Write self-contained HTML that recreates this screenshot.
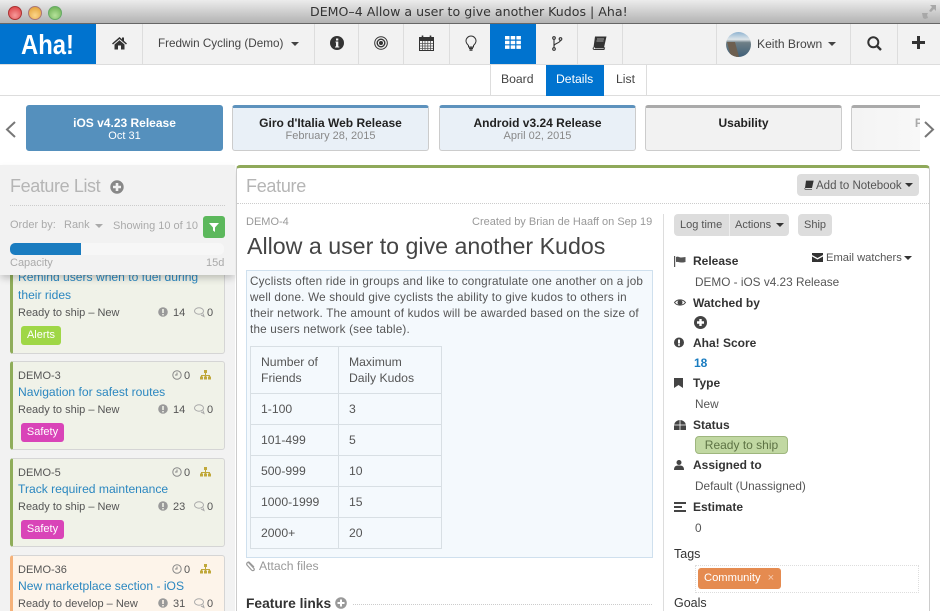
<!DOCTYPE html>
<html><head><meta charset="utf-8"><style>
html,body{margin:0;padding:0;overflow:hidden;width:940px;height:611px}
#w{position:relative;width:940px;height:611px;overflow:hidden;background:#fff;font-family:"Liberation Sans",sans-serif;font-size:12px;color:#555;filter:blur(.3px)}
.a{position:absolute}
.t{position:absolute;white-space:nowrap;line-height:20px}
.s{font-size:11px}
.v{position:absolute;width:1px;top:24px;height:40px;background:#ddd}
svg{position:absolute;overflow:visible}
.rc{position:absolute;top:105px;height:42px;border:1px solid #ccc;border-top:3px solid #5d92bd;border-radius:3px;background:#e9f0f7;text-align:center;box-sizing:content-box;line-height:12px;font-size:11px;color:#888;width:195px}
.rc b{display:block;color:#222;padding-top:9px;margin-bottom:1px;font-size:12px;line-height:12px}
.card{position:absolute;left:10px;width:211px;border:1px solid #d5d5d5;border-left:3px solid #8fad5a;border-radius:3px;background:#f0f2e8;box-sizing:content-box}
.tag{position:absolute;color:#fff;border-radius:3px;text-align:center;font-size:11px;line-height:19px;height:19px}
.blue{color:#2b87c0;font-size:12.1px}
.lb{font-weight:bold;color:#333;font-size:12px}
.btn{position:absolute;background:#ddd;border-radius:4px;height:22px;line-height:23px;color:#555;font-size:11px;text-align:center}
td{border:1px solid #d8dfe4;padding:0 0 0 10px;font-size:12.2px;color:#555;line-height:16px}
</style></head><body><div id="w">

<!-- title bar -->
<div class="a" style="left:0;top:0;width:940px;height:23px;background:linear-gradient(#ececec,#b3b3b3);border-bottom:1px solid #666"></div>
<div class="a" style="left:8px;top:6px;width:12px;height:12px;border-radius:50%;background:radial-gradient(circle at 50% 70%,#f79a9a,#d9363a);border:.5px solid #a33"></div>
<div class="a" style="left:28px;top:6px;width:12px;height:12px;border-radius:50%;background:radial-gradient(circle at 50% 70%,#fbd58a,#e09b2c);border:.5px solid #a77"></div>
<div class="a" style="left:48px;top:6px;width:12px;height:12px;border-radius:50%;background:radial-gradient(circle at 50% 70%,#b5e29a,#62a94a);border:.5px solid #6a6"></div>
<div class="t" style="left:310px;top:2px;font-family:'DejaVu Sans',sans-serif;font-size:12.6px;color:#333">DEMO–4 Allow a user to give another Kudos | Aha!</div>
<svg style="left:921px;top:4px" width="16" height="16" viewBox="0 0 16 16" fill="#a8a8a8"><path d="M9 1h6v6l-2-2-3 3-2-1 3-4zM1 9l6 0-1 2 1 3-3 1-2-1z"/></svg>

<!-- nav -->
<div class="a" style="left:0;top:24px;width:940px;height:40px;background:#f2f2f2;border-bottom:1px solid #ddd"></div>
<div class="a" style="left:0;top:24px;width:96px;height:40px;background:#0073cf"></div>
<div class="t" style="left:21px;top:31px;font-size:28px;font-weight:bold;color:#fff;line-height:28px;transform:scaleX(.85);transform-origin:left">Aha!</div>
<div class="v" style="left:142px"></div><div class="v" style="left:314px"></div><div class="v" style="left:358px"></div><div class="v" style="left:403px"></div><div class="v" style="left:449px"></div><div class="v" style="left:577px"></div><div class="v" style="left:622px"></div><div class="v" style="left:716px"></div><div class="v" style="left:850px"></div><div class="v" style="left:897px"></div>
<div class="a" style="left:490px;top:24px;width:46px;height:40px;background:#0073cf"></div>

<svg style="left:112px;top:36px" width="15" height="14" viewBox="0 0 15 14" fill="#333"><path d="M7.5 1L0 7.5l1 1 6.5-5.5 6.5 5.5 1-1-3-2.6V1.5h-2v1.7zM2.5 8.5V13.5H6V9.5h3v4h3.5V8.5l-5-4.2z"/></svg>
<div class="t" style="left:158px;top:34px;font-size:11.7px;color:#444">Fredwin Cycling (Demo)</div>
<svg style="left:291px;top:42px" width="8" height="4" fill="#444"><path d="M0 0h8L4 4z"/></svg>
<svg style="left:330px;top:36px" width="14" height="14" viewBox="0 0 14 14"><circle cx="7" cy="7" r="7" fill="#333"/><path d="M5.5 5.5H8.3V10.500H9.3V11.500H5V10.500H6V6.500H5.500zM6 2.500H8.300V4.500H6z" fill="#f2f2f2"/></svg>
<svg style="left:374px;top:36px" width="14" height="14" viewBox="0 0 14 14" fill="none" stroke="#333"><circle cx="7" cy="7" r="6.3"/><circle cx="7" cy="7" r="3.8" stroke-width="1.4"/><circle cx="7" cy="7" r="1.5" fill="#333"/></svg>
<svg style="left:419px;top:35px" width="15" height="16" viewBox="0 0 15 16"><rect x=".5" y="2.5" width="14" height="13" fill="#f2f2f2" stroke="#333"/><rect x=".5" y="2.5" width="14" height="3.5" fill="#333"/><path d="M3.5 0.5v3M11.5 0.5v3" stroke="#333" stroke-width="1.6"/><path d="M1 8.5h13M1 11h13M1 13.5h13M3.5 6v9M6 6v9M8.8 6v9M11.5 6v9" stroke="#555" stroke-width=".8"/></svg>
<svg style="left:465px;top:36px" width="12" height="15" viewBox="0 0 12 15" fill="none" stroke="#333"><path d="M3.5 9.5C2 8 1 6.8 1 5a5 5 0 0 1 10 0c0 1.8-1 3-2.5 4.5V11h-5z"/><path d="M4 12.3h4M4.5 14h3" stroke-width="1.4"/></svg>
<svg style="left:505px;top:36px" width="16" height="13" fill="#fff"><path d="M0 0h4.5v3.5H0zM5.7 0h4.5v3.5H5.700zM11.4 0h4.5v3.5h-4.5zM0 4.700h4.500v3.500H0zM5.700 4.700h4.500v3.500H5.700zM11.400 4.700h4.500v3.500h-4.500zM0 9.400h4.500v3.500H0zM5.700 9.400h4.500v3.500H5.700zM11.400 9.400h4.500v3.500h-4.500z"/></svg>
<svg style="left:551px;top:36px" width="12" height="15" viewBox="0 0 12 15" fill="none" stroke="#333" stroke-width="1.1"><circle cx="3" cy="2" r="1.3"/><circle cx="3" cy="13" r="1.3"/><circle cx="9.5" cy="3" r="1.3"/><path d="M3 3.300v8.400M3 10c0-3 6-2.500 6.500-5.800"/></svg>
<svg style="left:592px;top:36px" width="15" height="14" viewBox="0 0 15 14"><path d="M3 0.500H14.500L12 11.500H1.500z" fill="#333"/><path d="M1.500 11.500C.5 13.500 2 13.500 3 13.500H12l.5-1.600H3" fill="#f2f2f2" stroke="#333"/><path d="M5 3h7M4.500 5h7" stroke="#ccc" stroke-width=".8"/></svg>

<div class="a" style="left:726px;top:32px;width:25px;height:25px;border-radius:50%;background:linear-gradient(#8fb3d0 0,#dfe6ea 30%,#6e7f86 42%,#3f5f78 100%);overflow:hidden"><div class="a" style="left:3px;top:10px;width:8px;height:15px;background:#6d5f50;transform:skewX(15deg)"></div></div>
<div class="t" style="left:757px;top:34px;font-size:12.1px;color:#444">Keith Brown</div>
<svg style="left:828px;top:42px" width="8" height="4" fill="#444"><path d="M0 0h8L4 4z"/></svg>
<svg style="left:867px;top:36px" width="15" height="15" viewBox="0 0 15 15" fill="none" stroke="#333" stroke-width="2"><circle cx="6.3" cy="6.3" r="5"/><path d="M10 10l4 4" stroke-width="2.4"/></svg>
<svg style="left:912px;top:36px" width="13" height="13" fill="#333"><path d="M5 0h3v5h5v3H8v5H5V8H0V5h5z"/></svg>

<!-- sub tabs -->
<div class="a" style="left:0;top:95px;width:940px;height:1px;background:#ddd"></div>
<div class="a" style="left:490px;top:65px;width:157px;height:30px;border-left:1px solid #ddd;border-right:1px solid #ddd;box-sizing:border-box"></div>
<div class="a" style="left:546px;top:65px;width:58px;height:31px;background:#0073cf"></div>
<div class="t" style="left:501px;top:69px;color:#444;font-size:12.2px">Board</div>
<div class="t" style="left:556px;top:69px;color:#fff;font-size:12.2px">Details</div>
<div class="t" style="left:616px;top:69px;color:#444;font-size:12.2px">List</div>

<!-- releases -->
<svg style="left:5px;top:121px" width="11" height="17" fill="none" stroke="#777" stroke-width="2"><path d="M10 1L2 8.5l8 7.5"/></svg>
<svg style="left:924px;top:121px" width="11" height="17" fill="none" stroke="#777" stroke-width="2"><path d="M1 1l8 7.5L1 16"/></svg>
<div class="rc" style="left:26px;background:#5590bd;border-color:#5590bd;color:#fff"><b style="color:#fff">iOS v4.23 Release</b>Oct 31</div>
<div class="rc" style="left:232px"><b>Giro d'Italia Web Release</b>February 28, 2015</div>
<div class="rc" style="left:439px"><b>Android v3.24 Release</b>April 02, 2015</div>
<div class="rc" style="left:645px;border-top-color:#aaa;background:#f2f2f2"><b>Usability</b></div>
<div class="a" style="left:851px;top:105px;width:69px;height:46px;overflow:hidden"><div class="rc" style="left:0;top:0;border-top-color:#aaa;background:linear-gradient(90deg,#f4f4f4,#fff)"><b style="color:#aaa;padding-left:4px">Performance</b></div></div>

<!-- left column -->
<div class="a" style="left:0;top:165px;width:235px;height:446px;background:#f2f2f2"></div>
<div class="card" style="top:250px;height:102px"></div>
<div class="t blue" style="left:18px;top:267px">Remind users when to fuel during</div>
<div class="t blue" style="left:18px;top:285px">their rides</div>
<div class="t s" style="left:18px;top:303px">Ready to ship – New</div>
<svg style="left:158px;top:307px" width="10" height="10"><circle cx="5" cy="5" r="4.8" fill="#999"/><path d="M4.2 2h1.6v4H4.2zM4.2 7h1.6v1.4H4.2z" fill="#f0f2e8"/></svg>
<div class="t s" style="left:173px;top:303px">14</div>
<svg style="left:194px;top:307px" width="11" height="10" fill="none" stroke="#aaa"><ellipse cx="5" cy="4" rx="4.5" ry="3.2"/><path d="M7 8l3 1.5-1-3"/></svg>
<div class="t s" style="left:207px;top:303px">0</div>
<div class="tag" style="left:21px;top:326px;width:40px;background:#9fd746">Alerts</div>

<div class="card" style="top:361px;height:87px"></div>
<div class="t s" style="left:18px;top:366px">DEMO-3</div>
<svg style="left:172px;top:370px" width="10" height="10" fill="none" stroke="#888"><circle cx="5" cy="5" r="4.2"/><path d="M5 2.5V5H3"/></svg>
<div class="t s" style="left:184px;top:366px">0</div>
<svg style="left:200px;top:370px" width="11" height="10" fill="#c0a83a"><path d="M4 0h3v3H4zM0 6.5h3v3H0zM4 6.5h3v3H4zM8 6.5h3v3H8zM5 3h1v2h4v2H9V6H6v1H5V6H2v1H1V5h4z"/></svg>
<div class="t blue" style="left:18px;top:382px">Navigation for safest routes</div>
<div class="t s" style="left:18px;top:400px">Ready to ship – New</div>
<svg style="left:158px;top:404px" width="10" height="10"><circle cx="5" cy="5" r="4.8" fill="#999"/><path d="M4.2 2h1.6v4H4.2zM4.2 7h1.6v1.4H4.2z" fill="#f0f2e8"/></svg>
<div class="t s" style="left:173px;top:400px">14</div>
<svg style="left:194px;top:404px" width="11" height="10" fill="none" stroke="#aaa"><ellipse cx="5" cy="4" rx="4.5" ry="3.2"/><path d="M7 8l3 1.5-1-3"/></svg>
<div class="t s" style="left:207px;top:400px">0</div>
<div class="tag" style="left:21px;top:423px;width:43px;background:#d944b8">Safety</div>

<div class="card" style="top:458px;height:87px"></div>
<div class="t s" style="left:18px;top:463px">DEMO-5</div>
<svg style="left:172px;top:467px" width="10" height="10" fill="none" stroke="#888"><circle cx="5" cy="5" r="4.2"/><path d="M5 2.5V5H3"/></svg>
<div class="t s" style="left:184px;top:463px">0</div>
<svg style="left:200px;top:467px" width="11" height="10" fill="#c0a83a"><path d="M4 0h3v3H4zM0 6.5h3v3H0zM4 6.5h3v3H4zM8 6.5h3v3H8zM5 3h1v2h4v2H9V6H6v1H5V6H2v1H1V5h4z"/></svg>
<div class="t blue" style="left:18px;top:479px">Track required maintenance</div>
<div class="t s" style="left:18px;top:497px">Ready to ship – New</div>
<svg style="left:158px;top:501px" width="10" height="10"><circle cx="5" cy="5" r="4.8" fill="#999"/><path d="M4.2 2h1.6v4H4.2zM4.2 7h1.6v1.4H4.2z" fill="#f0f2e8"/></svg>
<div class="t s" style="left:173px;top:497px">23</div>
<svg style="left:194px;top:501px" width="11" height="10" fill="none" stroke="#aaa"><ellipse cx="5" cy="4" rx="4.5" ry="3.2"/><path d="M7 8l3 1.5-1-3"/></svg>
<div class="t s" style="left:207px;top:497px">0</div>
<div class="tag" style="left:21px;top:520px;width:43px;background:#d944b8">Safety</div>

<div class="card" style="top:555px;height:80px;background:#fdf4ea;border-left-color:#f5b27a"></div>
<div class="t s" style="left:18px;top:560px">DEMO-36</div>
<svg style="left:172px;top:564px" width="10" height="10" fill="none" stroke="#888"><circle cx="5" cy="5" r="4.2"/><path d="M5 2.5V5H3"/></svg>
<div class="t s" style="left:184px;top:560px">0</div>
<svg style="left:200px;top:564px" width="11" height="10" fill="#c0a83a"><path d="M4 0h3v3H4zM0 6.5h3v3H0zM4 6.5h3v3H4zM8 6.5h3v3H8zM5 3h1v2h4v2H9V6H6v1H5V6H2v1H1V5h4z"/></svg>
<div class="t blue" style="left:18px;top:576px">New marketplace section - iOS</div>
<div class="t s" style="left:18px;top:594px">Ready to develop – New</div>
<svg style="left:158px;top:598px" width="10" height="10"><circle cx="5" cy="5" r="4.8" fill="#999"/><path d="M4.2 2h1.6v4H4.2zM4.2 7h1.6v1.4H4.2z" fill="#fdf4ea"/></svg>
<div class="t s" style="left:173px;top:594px">31</div>
<svg style="left:194px;top:598px" width="11" height="10" fill="none" stroke="#aaa"><ellipse cx="5" cy="4" rx="4.5" ry="3.2"/><path d="M7 8l3 1.5-1-3"/></svg>
<div class="t s" style="left:207px;top:594px">0</div>

<!-- left header panel -->
<div class="a" style="left:0;top:165px;width:235px;height:110px;background:#f2f2f2;box-shadow:0 4px 7px -1px rgba(0,0,0,.22)"></div>
<div class="t" style="left:10px;top:175px;font-size:18px;color:#b5b5b5;line-height:22px;letter-spacing:-.4px">Feature List</div>
<svg style="left:110px;top:180px" width="14" height="14"><circle cx="7" cy="7" r="6.7" fill="#888"/><path d="M5.7 3h2.6v2.7H11v2.6H8.3v2.7H5.7V8.3H3V5.700h2.700z" fill="#f2f2f2"/></svg>
<div class="a" style="left:10px;top:205px;width:215px;border-top:1px dotted #ccc"></div>
<div class="t s" style="left:10px;top:215px;color:#aaa">Order by:</div>
<div class="t s" style="left:64px;top:215px;color:#aaa">Rank</div>
<svg style="left:95px;top:224px" width="8" height="4" fill="#aaa"><path d="M0 0h8L4 4z"/></svg>
<div class="t s" style="left:113px;top:216px;color:#aaa">Showing 10 of 10</div>
<div class="a" style="left:203px;top:216px;width:22px;height:22px;background:#5cb85c;border-radius:3px"></div>
<svg style="left:209px;top:223px" width="10" height="9" fill="#fff"><path d="M0 0h10L6 4.500V9L4 7.500V4.500z"/></svg>
<div class="a" style="left:10px;top:243px;width:214px;height:12px;background:#f7f7f7;border-radius:5px"></div>
<div class="a" style="left:10px;top:243px;width:71px;height:12px;background:#1a7cc0;border-radius:5px 0 0 5px"></div>
<div class="t s" style="left:10px;top:253px;color:#aaa">Capacity</div>
<div class="t s" style="left:206px;top:253px;color:#aaa">15d</div>

<!-- main panel -->
<div class="a" style="left:236px;top:165px;width:692px;height:460px;border:1px solid #ccc;border-top:3px solid #8fa95a;border-radius:4px 4px 0 0;box-sizing:content-box;background:#fff"></div>
<div class="a" style="left:237px;top:203px;width:692px;border-top:1px dotted #ccc"></div>
<div class="t" style="left:246px;top:175px;font-size:18px;color:#b5b5b5;line-height:22px;letter-spacing:-.3px">Feature</div>
<div class="btn" style="left:797px;top:174px;width:122px;"></div>
<svg style="left:804px;top:180px" width="10" height="10" viewBox="0 0 15 14"><path d="M3 0.500H14.500L12 11.500H1.500z" fill="#333"/><path d="M1.500 11.500C.5 13.500 2 13.500 3 13.500H12" fill="none" stroke="#333"/></svg>
<div class="t" style="left:816px;top:176px;font-size:11.5px">Add to Notebook</div>
<svg style="left:905px;top:183px" width="8" height="4" fill="#333"><path d="M0 0h8L4 4z"/></svg>

<div class="t" style="left:246px;top:212px;font-size:11px;color:#999">DEMO-4</div>
<div class="t" style="left:472px;top:212px;font-size:11px;color:#999">Created by Brian de Haaff on Sep 19</div>
<div class="t" style="left:247px;top:232px;font-size:23.2px;color:#444;line-height:28px">Allow a user to give another Kudos</div>
<div class="a" style="left:663px;top:214px;width:1px;height:397px;background:#ddd"></div>

<div class="a" style="left:246px;top:270px;width:405px;height:286px;background:#f4f9fd;border:1px solid #cfe0ee"></div>
<div class="a" style="left:250px;top:274px;width:400px;font-size:11.7px;letter-spacing:.2px;line-height:16px;color:#555;white-space:nowrap">Cyclists often ride in groups and like to congratulate one another on a job<br>well done. We should give cyclists the ability to give kudos to others in<br>their network. The amount of kudos will be awarded based on the size of<br>the users network (see table).</div>
<table class="a" style="left:250px;top:346px;border-collapse:collapse;width:192px">
<tr style="height:47px"><td style="width:77px">Number of<br>Friends</td><td>Maximum<br>Daily Kudos</td></tr>
<tr style="height:31px"><td>1-100</td><td>3</td></tr>
<tr style="height:31px"><td>101-499</td><td>5</td></tr>
<tr style="height:31px"><td>500-999</td><td>10</td></tr>
<tr style="height:31px"><td>1000-1999</td><td>15</td></tr>
<tr style="height:31px"><td>2000+</td><td>20</td></tr>
</table>
<svg style="left:246px;top:560px" width="10" height="11" fill="none" stroke="#999" stroke-width="1.2"><path d="M2 2l6 6.500c1 1.500-1 3-2.500 1.500L1 5C0 3.500 2 1 3.500 2.500L8 7"/></svg>
<div class="t" style="left:259px;top:556px;color:#999;font-size:12.2px">Attach files</div>
<div class="t" style="left:246px;top:594px;font-size:13.8px;font-weight:bold;color:#333">Feature links</div>
<svg style="left:335px;top:597px" width="12" height="12"><circle cx="6" cy="6" r="5.8" fill="#999"/><path d="M5 2.500h2V5h2.500v2H7v2.500H5V7H2.500V5H5z" fill="#fff"/></svg>
<div class="a" style="left:353px;top:604px;width:299px;border-top:1px dotted #ccc"></div>

<!-- right column -->
<div class="btn" style="left:674px;top:214px;width:115px"></div>
<div class="a" style="left:729px;top:214px;width:1px;height:22px;background:#eee"></div>
<div class="t s" style="left:680px;top:215px">Log time</div>
<div class="t s" style="left:735px;top:215px">Actions</div>
<svg style="left:776px;top:223px" width="8" height="4" fill="#333"><path d="M0 0h8L4 4z"/></svg>
<div class="btn" style="left:798px;top:214px;width:34px">Ship</div>

<svg style="left:812px;top:253px" width="11" height="9" fill="#333"><path d="M0 0h11v2L5.500 5 0 2zM0 3.500l5.500 3 5.500-3V9H0z"/></svg>
<div class="t" style="left:826px;top:248px;font-size:11.2px">Email watchers</div>
<svg style="left:904px;top:256px" width="8" height="4" fill="#333"><path d="M0 0h8L4 4z"/></svg>

<svg style="left:674px;top:256px" width="12" height="11" fill="#555"><path d="M0 0h1.200v11H0zM2 1c2-1 3 .5 5 .5S10 1 11.500 1v5c-1.500.5-3 .5-4.500.5S4 5.500 2 6z"/></svg>
<div class="t lb" style="left:693px;top:251px">Release</div>
<div class="t" style="left:695px;top:272px;font-size:11.8px">DEMO - iOS v4.23 Release</div>

<svg style="left:674px;top:298px" width="12" height="9" fill="none" stroke="#444"><path d="M.5 4.500C3 1 9 1 11.500 4.500 9 8 3 8 .5 4.500z"/><circle cx="6" cy="4.500" r="2" fill="#444"/></svg>
<div class="t lb" style="left:693px;top:293px">Watched by</div>
<svg style="left:694px;top:316px" width="13" height="13"><circle cx="6.500" cy="6.500" r="6.500" fill="#444"/><path d="M5.300 3h2.400v2.300H10v2.400H7.700V10H5.300V7.700H3V5.300h2.300z" fill="#fff"/></svg>

<svg style="left:674px;top:337px" width="10" height="11"><circle cx="5" cy="5.500" r="5" fill="#444"/><path d="M4 2.500h2v4H4zM4 7.300h2v1.500H4z" fill="#fff"/></svg>
<div class="t lb" style="left:693px;top:333px">Aha! Score</div>
<div class="t" style="left:694px;top:353px;color:#1a7cc0;font-weight:bold;font-size:12px">18</div>

<svg style="left:674px;top:378px" width="9" height="10" fill="#444"><path d="M0 0h9v10L4.500 7 0 10z"/></svg>
<div class="t lb" style="left:693px;top:373px">Type</div>
<div class="t" style="left:695px;top:394px;font-size:11.8px">New</div>

<svg style="left:674px;top:420px" width="12" height="10" fill="#444"><path d="M6 0a6 6 0 0 1 6 6v4H0V6a6 6 0 0 1 6-6z"/><path d="M6 0v10M0 5h12" stroke="#fff" stroke-width=".8"/></svg>
<div class="t lb" style="left:693px;top:415px">Status</div>
<div class="a" style="left:695px;top:436px;width:91px;height:16px;background:#c1d8a2;border:1px solid #9eb67e;border-radius:4px;text-align:center;line-height:16px;font-size:12px;color:#5d7244">Ready to ship</div>

<svg style="left:674px;top:460px" width="10" height="10" fill="#444"><circle cx="5" cy="2.500" r="2.500"/><path d="M0 10c0-4 2-4.500 5-4.500s5 .5 5 4.500z"/></svg>
<div class="t lb" style="left:693px;top:455px">Assigned to</div>
<div class="t" style="left:695px;top:476px;font-size:11.8px">Default (Unassigned)</div>

<svg style="left:674px;top:502px" width="12" height="10" fill="#444"><path d="M0 0h12v2H0zM0 4h8v2H0zM0 8h12v2H0z"/></svg>
<div class="t lb" style="left:693px;top:497px">Estimate</div>
<div class="t" style="left:695px;top:518px;font-size:11.8px">0</div>

<div class="t" style="left:674px;top:544px;color:#333;font-size:12.5px">Tags</div>
<div class="a" style="left:695px;top:565px;width:222px;height:26px;border:1px dotted #ddd"></div>
<div class="a" style="left:698px;top:568px;width:83px;height:21px;background:#e58b50;border-radius:3px;color:#fff;line-height:21px;font-size:11.2px;padding-left:6px;box-sizing:border-box">Community<span style="margin-left:7px;color:#f6cdb4">×</span></div>
<div class="t" style="left:674px;top:593px;color:#333;font-size:12.5px">Goals</div>

</div></body></html>
